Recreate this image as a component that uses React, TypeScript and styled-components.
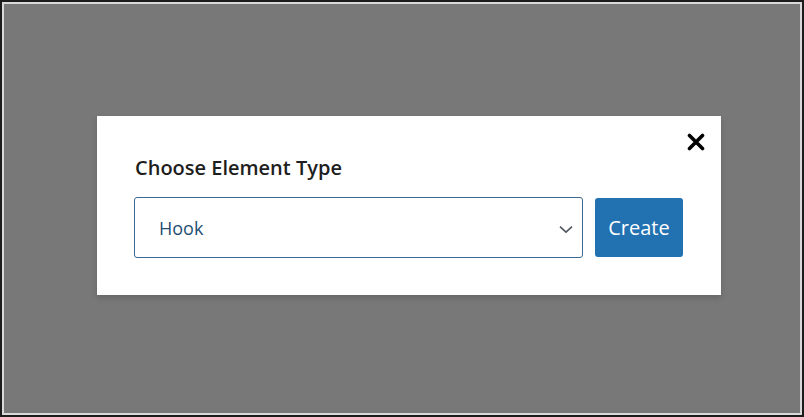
import React from "react";
import styled, { createGlobalStyle } from "styled-components";

const Global = createGlobalStyle`
  html, body { margin: 0; padding: 0; background: #fff; }
  body { font-family: "Open Sans", "Noto Sans", Arial, sans-serif; }
  * { box-sizing: border-box; }
`;

const Frame = styled.div`
  width: 804px;
  height: 417px;
  border: 2px solid #1c1c1c;
  background: #1c1c1c;
`;

const Backdrop = styled.div`
  width: 100%;
  height: 100%;
  border: 2px solid #d9d9d9;
  background: #787878;
  padding: 112px 79px 118px 93px;
  display: flex;
  align-items: stretch;
`;

const Modal = styled.div`
  position: relative;
  flex: 1;
  background: #fff;
  padding: 38px 38px 37px 37px;
  display: flex;
  flex-direction: column;
  gap: 15px;
  box-shadow: 0 3px 6px rgba(0, 0, 0, 0.15);
`;

const Close = styled.button`
  position: absolute;
  top: 15px;
  right: 14px;
  width: 22px;
  height: 22px;
  padding: 0;
  border: 0;
  background: transparent;
  display: flex;
  align-items: center;
  justify-content: center;
  cursor: pointer;
`;

const Title = styled.h2`
  margin: 0 0 0 1px;
  font-size: 20px;
  line-height: 28px;
  font-weight: 600;
  color: #1e1e1e;
  letter-spacing: 0;
`;

const Row = styled.div`
  display: flex;
  align-items: center;
  gap: 12px;
`;

const SelectWrap = styled.div`
  position: relative;
  flex: 1;
  height: 61px;
`;

const Select = styled.select`
  appearance: none;
  width: 100%;
  height: 100%;
  border: 1px solid #3d6a91;
  border-radius: 3px;
  background: #fff;
  padding: 0 40px 0 24px;
  font-family: "Open Sans", "Noto Sans", Arial, sans-serif;
  font-size: 18px;
  color: #1e4e72;
  outline: none;
`;

const Chevron = styled.svg`
  position: absolute;
  right: 10px;
  top: 50%;
  transform: translateY(-30%);
  pointer-events: none;
`;

const Button = styled.button`
  width: 88px;
  height: 59px;
  border: 0;
  border-radius: 3px;
  background: #2271b1;
  color: #fff;
  font-family: "Open Sans", "Noto Sans", Arial, sans-serif;
  font-size: 20px;
  padding: 0;
  cursor: pointer;
`;

export default function App() {
  return (
    <>
      <Global />
      <Frame>
        <Backdrop>
          <Modal>
            <Close aria-label="Close">
              <svg width="18" height="18" viewBox="0 0 18 18">
                <path d="M2.5 2.5 L15.5 15.5 M15.5 2.5 L2.5 15.5" stroke="#000" strokeWidth="3.6" strokeLinecap="round" />
              </svg>
            </Close>
            <Title>Choose Element Type</Title>
            <Row>
              <SelectWrap>
                <Select defaultValue="hook">
                  <option value="hook">Hook</option>
                  <option value="block">Block</option>
                  <option value="layout">Layout</option>
                </Select>
                <Chevron width="14" height="8" viewBox="0 0 14 8">
                  <path d="M1 1 L7 6.5 L13 1" fill="none" stroke="#50575e" strokeWidth="1.6" />
                </Chevron>
              </SelectWrap>
              <Button>Create</Button>
            </Row>
          </Modal>
        </Backdrop>
      </Frame>
    </>
  );
}
